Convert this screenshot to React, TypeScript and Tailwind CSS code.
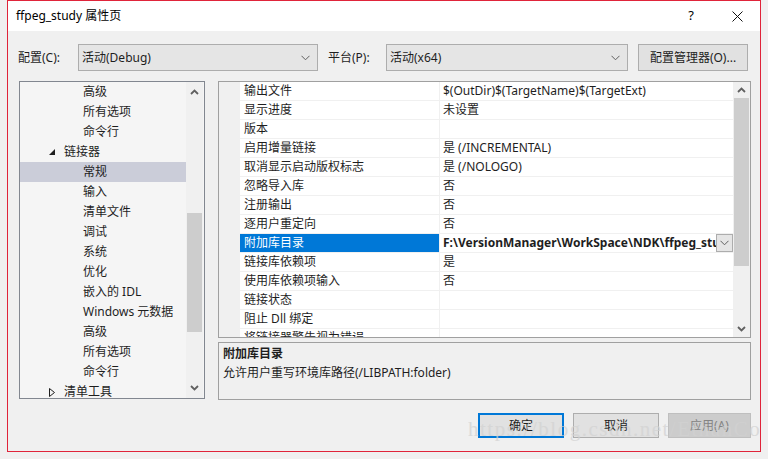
const font = { fontFamily: '"Noto Sans", "Noto Sans CJK SC", sans-serif' };

const treeItems: { label: string; level: 0 | 1; mark?: "open" | "closed"; selected?: boolean }[] = [
  { label: "高级", level: 1 },
  { label: "所有选项", level: 1 },
  { label: "命令行", level: 1 },
  { label: "链接器", level: 0, mark: "open" },
  { label: "常规", level: 1, selected: true },
  { label: "输入", level: 1 },
  { label: "清单文件", level: 1 },
  { label: "调试", level: 1 },
  { label: "系统", level: 1 },
  { label: "优化", level: 1 },
  { label: "嵌入的 IDL", level: 1 },
  { label: "Windows 元数据", level: 1 },
  { label: "高级", level: 1 },
  { label: "所有选项", level: 1 },
  { label: "命令行", level: 1 },
  { label: "清单工具", level: 0, mark: "closed" },
];

const props: { name: string; value: string; selected?: boolean }[] = [
  { name: "输出文件", value: "$(OutDir)$(TargetName)$(TargetExt)" },
  { name: "显示进度", value: "未设置" },
  { name: "版本", value: "" },
  { name: "启用增量链接", value: "是 (/INCREMENTAL)" },
  { name: "取消显示启动版权标志", value: "是 (/NOLOGO)" },
  { name: "忽略导入库", value: "否" },
  { name: "注册输出", value: "否" },
  { name: "逐用户重定向", value: "否" },
  { name: "附加库目录", value: "F:\\VersionManager\\WorkSpace\\NDK\\ffpeg_study", selected: true },
  { name: "链接库依赖项", value: "是" },
  { name: "使用库依赖项输入", value: "否" },
  { name: "链接状态", value: "" },
  { name: "阻止 Dll 绑定", value: "" },
  { name: "将链接器警告视为错误", value: "" },
];

function Chevron({ className = "" }: { className?: string }) {
  return (
    <svg width="9" height="6" viewBox="0 0 9 6" className={className}>
      <polyline points="0.5,0.8 4.5,4.8 8.5,0.8" fill="none" stroke="#606060" strokeWidth="1" />
    </svg>
  );
}

function Arrow({ up }: { up?: boolean }) {
  return (
    <svg width="9" height="6" viewBox="0 0 9 6">
      <polyline
        points={up ? "1,5 4.5,1.5 8,5" : "1,1 4.5,4.5 8,1"}
        fill="none"
        stroke="#606060"
        strokeWidth="1.8"
      />
    </svg>
  );
}

function Select({ value, width }: { value: string; width: string }) {
  return (
    <div className={`flex h-[27px] ${width} items-center justify-between border border-[#adadad] bg-[#e5e5e5] pl-[3px] pr-[7px]`}>
      <span>{value}</span>
      <Chevron />
    </div>
  );
}

function Tree() {
  return (
    <div className="flex h-[318px] w-[186px] overflow-hidden border border-[#828790] bg-[#f5f5f5]">
      <div className="w-[166px] overflow-hidden">
        {treeItems.map((item, i) => (
          <div
            key={i}
            className={`flex h-[20px] shrink-0 items-center whitespace-nowrap ${item.selected ? "bg-[#cbcdd9]" : ""}`}
          >
            {item.level === 0 ? (
              <>
                <span className="flex w-[44px] justify-end pr-[9px]">
                  {item.mark === "open" ? (
                    <svg width="6" height="6" viewBox="0 0 6 6">
                      <polygon points="6,0 6,6 0,6" fill="#1e1e1e" />
                    </svg>
                  ) : (
                    <svg width="6" height="9" viewBox="0 0 6 9">
                      <polygon points="0.5,0.5 5.5,4.5 0.5,8.5" fill="none" stroke="#1e1e1e" strokeWidth="1" />
                    </svg>
                  )}
                </span>
                <span>{item.label}</span>
              </>
            ) : (
              <span className="pl-[63px]">{item.label}</span>
            )}
          </div>
        ))}
      </div>
      <div className="flex w-[17px] flex-col items-center bg-[#f0f0f0]">
        <div className="flex h-[20px] items-center">
          <Arrow up />
        </div>
        <div className="mt-[111px] h-[121px] w-[15px] bg-[#cdcdcd]" />
        <div className="mt-[46px] flex h-[20px] items-center">
          <Arrow />
        </div>
      </div>
    </div>
  );
}

function Grid() {
  return (
    <div className="flex h-[257px] w-[533px] overflow-hidden border border-[#a0a0a0] bg-white">
      <div className="w-[21px] bg-[#f0f0f0]" />
      <div className="w-[493px] overflow-hidden">
        {props.map((p, i) => (
          <div key={i} className="flex h-[19px] border-b border-[#f0f0f0] whitespace-nowrap">
            <div
              className={`flex w-[199px] items-center pl-[4px] ${p.selected ? "bg-[#0078d7] text-white" : ""}`}
            >
              {p.name}
            </div>
            <div className="relative flex w-[294px] items-center overflow-hidden border-l border-[#f0f0f0] pl-[3px]">
              <span className={p.selected ? "font-bold" : ""}>{p.value}</span>
              {p.selected && (
                <div className="absolute right-0 top-0 flex h-[18px] w-[17px] items-center justify-center border border-[#adadad] bg-[#e5e5e5]">
                  <Chevron />
                </div>
              )}
            </div>
          </div>
        ))}
      </div>
      <div className="flex w-[17px] flex-col items-center bg-[#f0f0f0]">
        <div className="flex h-[16px] items-center">
          <Arrow up />
        </div>
        <div className="h-[169px] w-[15px] bg-[#cdcdcd]" />
        <div className="mt-[55px] flex h-[16px] items-center">
          <Arrow />
        </div>
      </div>
    </div>
  );
}

export default function App() {
  return (
    <div className="relative h-[459px] w-[768px] overflow-hidden bg-[#f0f0f0] text-[12px] text-[#1e1e1e]" style={font}>
      <div className="ml-[7px] flex h-[452px] w-[754px] flex-col border border-[#e0243a] bg-[#f0f0f0]">
        {/* title bar */}
        <div className="flex h-[30px] items-center bg-white pl-[8px]">
          <span className="flex-1 text-[12px] text-black">ffpeg_study 属性页</span>
          <span className="mr-[38px] text-[13px] text-black">?</span>
          <svg width="11" height="11" viewBox="0 0 11 11" className="mr-[17px]">
            <path d="M0.5 0.5 L10.5 10.5 M10.5 0.5 L0.5 10.5" stroke="#111" strokeWidth="1" />
          </svg>
        </div>

        {/* configuration row */}
        <div className="ml-[10px] mt-[13px] flex items-center">
          <span className="w-[60px]">配置(C):</span>
          <Select value="活动(Debug)" width="w-[240px]" />
          <span className="ml-[10px] w-[58px]">平台(P):</span>
          <Select value="活动(x64)" width="w-[242px]" />
          <div className="ml-[10px] flex h-[27px] w-[110px] items-center justify-center border border-[#adadad] bg-[#e1e1e1]">
            配置管理器(O)...
          </div>
        </div>

        {/* main panels */}
        <div className="ml-[11px] mt-[10px] flex">
          <Tree />
          <div className="ml-[13px] flex flex-col">
            <Grid />
            <div className="mt-[4px] flex h-[58px] w-[533px] flex-col border border-[#a0a0a0] bg-[#f0f0f0] pl-[4px] pt-[2px]">
              <span className="font-bold leading-[18px]">附加库目录</span>
              <span className="leading-[20px]">允许用户重写环境库路径(/LIBPATH:folder)</span>
            </div>
          </div>
        </div>

        {/* buttons */}
        <div className="ml-[470px] mt-[13px] flex gap-[9px]">
          <div className="flex h-[25px] w-[86px] items-center justify-center border-2 border-[#0078d7] bg-[#e1e1e1]">确定</div>
          <div className="flex h-[25px] w-[86px] items-center justify-center border border-[#adadad] bg-[#e1e1e1]">取消</div>
          <div className="flex h-[25px] w-[83px] items-center justify-center border border-[#bfbfbf] bg-[#cccccc] text-[#838383]">
            应用(A)
          </div>
        </div>
      </div>

      {/* watermark */}
      <div
        className="pointer-events-none absolute left-[468px] top-[414px] whitespace-nowrap text-[21px] tracking-[1.5px] text-[#d2d2d2] opacity-70"
        style={{ fontFamily: '"Liberation Serif", serif' }}
      >
        https://blog.csdn.net/EthanCo
      </div>
    </div>
  );
}
